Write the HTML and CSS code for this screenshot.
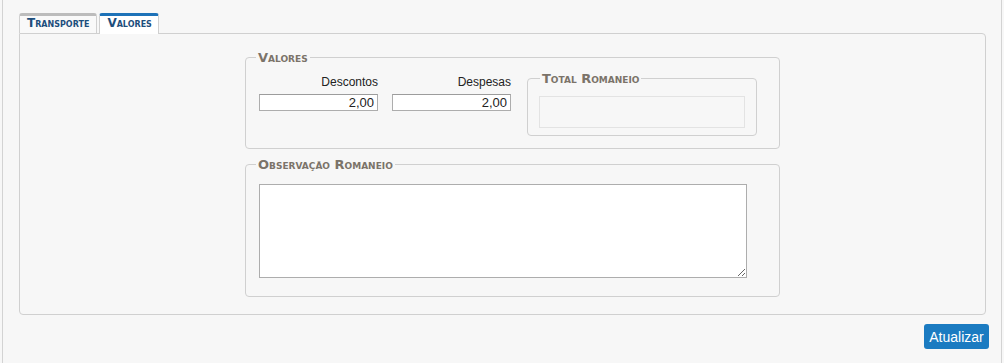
FILE: index.html
```html
<!DOCTYPE html>
<html lang="pt-BR">
<head>
    <meta charset="UTF-8">
    <title>Romaneio - Valores</title>
    <link rel="stylesheet" href="styles.css">
</head>
<body>
<div class="page">
    <div class="tabs">
        <div class="tab">Transporte</div>
        <div class="tab active">Valores</div>
    </div>
    <div class="panel">
        <fieldset class="box box_valores">
            <legend>Valores</legend>
            <div class="row">
                <div class="field">
                    <label>Descontos</label>
                    <input type="text" value="2,00">
                </div>
                <div class="field">
                    <label>Despesas</label>
                    <input type="text" value="2,00">
                </div>
                <fieldset class="box box_total">
                    <legend>Total Romaneio</legend>
                    <div class="total"></div>
                </fieldset>
            </div>
        </fieldset>
        <fieldset class="box box_obs">
            <legend>Observação Romaneio</legend>
            <textarea></textarea>
        </fieldset>
    </div>
    <div class="actions">
        <button type="button" class="btn">Atualizar</button>
    </div>
</div>
</body>
</html>
```

FILE: styles.css
```css
html, body {
    margin: 0;
    height: 100%;
    background-color: #f7f7f7;
    font-size: 12px;
    font-family: "Liberation Sans", Arial, sans-serif;
    color: #222;
}

.page {
    margin: 0 2px;
    height: 100%;
    box-sizing: border-box;
    border-left: 1px solid #d3d3d3;
    border-right: 1px solid #d3d3d3;
    padding: 13px 15px 0 16px;
}

.tabs {
    display: flex;
    gap: 2px;
    height: 20px;
}

.tab {
    box-sizing: border-box;
    height: 20px;
    padding: 0 7px 0 7px;
    border: 1px solid #d0d0d0;
    border-top: 3px solid #bcbcbc;
    border-bottom: none;
    border-radius: 3px 3px 0 0;
    background-color: #f9f9f9;
    font-family: "DejaVu Sans", Verdana, sans-serif;
    font-size: 12px;
    font-weight: bold;
    font-variant: small-caps;
    line-height: 15px;
    color: #1d4e7c;
}

.tab.active {
    height: 21px;
    padding: 0 6px 0 7px;
    border-top-color: #1d72b8;
    background-color: #fff;
    position: relative;
    z-index: 1;
}

.panel {
    border: 1px solid #d0d0d0;
    border-radius: 0 4px 4px 4px;
    padding: 17px 0 17px 225px;
    height: 282px;
    box-sizing: border-box;
}

.box {
    margin: 0;
    border: 1px solid #d0d0d0;
    border-radius: 4px;
    padding: 0 13px;
    min-width: 0;
}

.box legend {
    margin-left: -3px;
    padding: 0 2px;
    font-family: "DejaVu Sans", Verdana, sans-serif;
    font-size: 13px;
    font-weight: bold;
    font-variant: small-caps;
    line-height: 13px;
    color: #7b7369;
}

.box_valores {
    width: 535px;
    height: 98px;
    box-sizing: border-box;
}

.row {
    display: flex;
    align-items: flex-start;
}

.field {
    display: flex;
    flex-direction: column;
    align-items: flex-end;
    flex-shrink: 0;
    width: 119px;
    margin-right: 14px;
    padding-top: 10px;
}

.field + .field {
    margin-right: 16px;
}

.field label {
    line-height: 16px;
    font-size: 12px;
}

.field input {
    margin-top: 4px;
    width: 119px;
    height: 17px;
    box-sizing: border-box;
    border: 1px solid #adadad;
    border-top-color: #9c9c9c;
    background-color: #fff;
    padding: 0 3px;
    text-align: right;
    font-family: "Liberation Sans", Arial, sans-serif;
    font-size: 13px;
    color: #222;
}

.box_total {
    flex-shrink: 0;
    margin-top: 8px;
    width: 230px;
    height: 64px;
    box-sizing: border-box;
    padding: 0 11px;
}

.box_total legend {
    margin-left: 1px;
}

.total {
    margin-top: 11px;
    height: 32px;
    box-sizing: border-box;
    border: 1px solid #e3e3e3;
    background-color: #f7f7f7;
}

.box_obs {
    margin-top: 9px;
    width: 535px;
    height: 139px;
    box-sizing: border-box;
}

.box_obs textarea {
    display: block;
    margin-top: 13px;
    width: 488px;
    height: 94px;
    box-sizing: border-box;
    border: 1px solid #adadad;
    background-color: #fff;
}

.actions {
    display: flex;
    justify-content: flex-end;
    margin-right: -3px;
    padding-top: 9px;
}

.btn {
    width: 65px;
    height: 25px;
    border: none;
    border-radius: 3px;
    background-color: #1b7bc1;
    color: #fff;
    font-family: "Liberation Sans", Arial, sans-serif;
    font-size: 14px;
    padding: 0;
}
```
